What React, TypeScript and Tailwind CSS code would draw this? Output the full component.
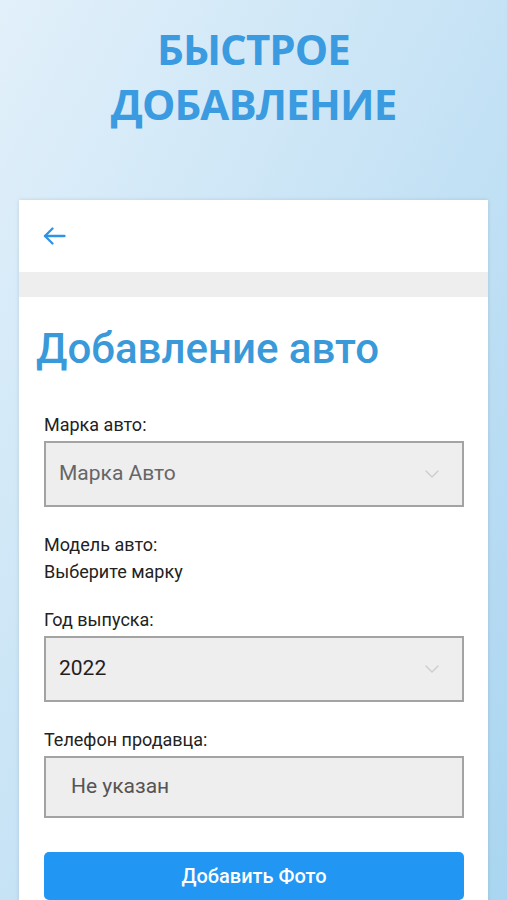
import { ChevronDown } from 'lucide-react';

function Label({ children }: { children: React.ReactNode }) {
  return <div className="text-[18px] leading-[21px] text-[#222]">{children}</div>;
}

function SelectBox({ value, muted }: { value: string; muted?: boolean }) {
  return (
    <div className="mt-[6px] h-[66px] flex items-center justify-between border-2 border-[#a3a3a3] bg-[#efeeee] pl-[13px] pr-[18px]">
      <span className={`text-[21px] ${muted ? 'text-[#666]' : 'text-[#1f1f1f]'}`}>{value}</span>
      <ChevronDown className="w-[24px] h-[24px] text-[#cfcfcf]" strokeWidth={1.5} />
    </div>
  );
}

export default function App() {
  return (
    <div className="min-h-[900px] overflow-hidden bg-linear-to-br from-[#e2f0fa] to-[#a9d5f0] font-['Roboto',sans-serif]">
      <div className="pt-[21px] text-center font-['Open_Sans',sans-serif] font-bold text-[42px] leading-[55px] text-[#3a9be0] tracking-[-0.9px]">
        <div>БЫСТРОЕ</div>
        <div>ДОБАВЛЕНИЕ</div>
      </div>

      <div className="mt-[69px] mx-[19px] bg-white shadow-[0_0_4px_rgba(0,0,0,0.12)] min-h-[720px]">
        <div className="h-[72px] flex items-center pl-[24px]">
          <svg width="23" height="18" viewBox="0 0 23 18" fill="none" stroke="#2f93e6" strokeWidth="2.3" strokeLinecap="round" strokeLinejoin="round">
            <path d="M21.5 9H2" />
            <path d="M9.5 1.5L2 9l7.5 7.5" />
          </svg>
        </div>
        <div className="h-[25px] bg-[#efeeee]" />

        <div className="pl-[25px] pr-[24px] pt-[27px]">
          <h1 className="-ml-[8px] text-[42px] leading-[50px] font-medium text-[#3a9ad9]">Добавление авто</h1>

          <div className="mt-[40px]">
            <Label>Марка авто:</Label>
            <SelectBox value="Марка Авто" muted />
          </div>

          <div className="mt-[24px] text-[18px] leading-[27px] text-[#222]">
            <div>Модель авто:</div>
            <div>Выберите марку</div>
          </div>

          <div className="mt-[24px]">
            <Label>Год выпуска:</Label>
            <SelectBox value="2022" />
          </div>

          <div className="mt-[27px]">
            <Label>Телефон продавца:</Label>
            <div className="mt-[6px] h-[62px] flex items-center border-2 border-[#a3a3a3] bg-[#efeeee] pl-[25px]">
              <span className="text-[21px] text-[#555]">Не указан</span>
            </div>
          </div>

          <button className="mt-[34px] w-full h-[48px] rounded-[5px] bg-[#2196f3] text-white text-[20px] font-medium">
            Добавить Фото
          </button>
        </div>
      </div>
    </div>
  );
}
